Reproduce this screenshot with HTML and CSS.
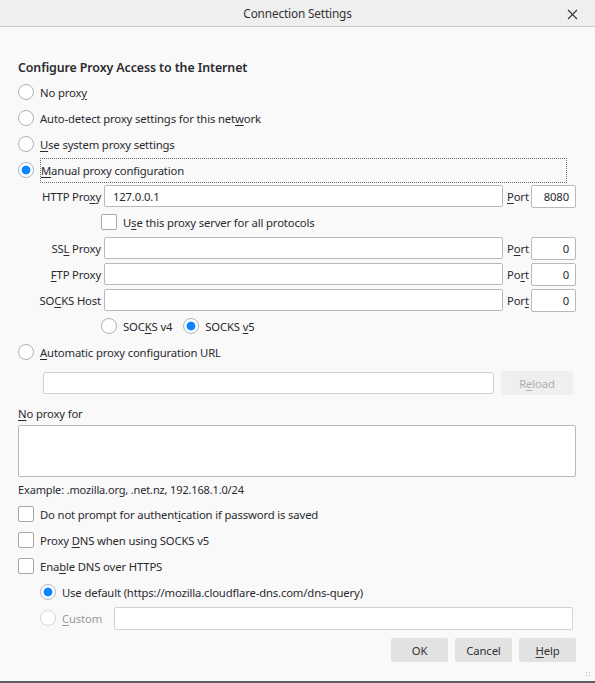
FILE: index.html
```html
<!DOCTYPE html>
<html>
<head>
<meta charset="utf-8">
<link rel="stylesheet" href="styles.css">
</head>
<body>
<div class="window">
  <div class="titlebar">
    <span class="title">Connection Settings</span>
    <svg class="close" width="11" height="11" viewBox="0 0 11 11"><path d="M1 1 L10 10 M10 1 L1 10" stroke="#333" stroke-width="1.1" fill="none"/></svg>
  </div>
  <div class="content">
    <div class="heading">Configure Proxy Access to the Internet</div>
    <div class="row"><span class="radio"></span><span class="lbl">No prox<u>y</u></span></div>
    <div class="row"><span class="radio"></span><span class="lbl">Auto-detect proxy settings for this net<u>w</u>ork</span></div>
    <div class="row"><span class="radio"></span><span class="lbl"><u>U</u>se system proxy settings</span></div>
    <div class="row"><span class="radio checked"></span><span class="lbl focus"><u>M</u>anual proxy configuration</span></div>

    <div class="proxy-row">
      <span class="plabel">HTTP Pro<u>x</u>y</span>
      <span class="input grow">127.0.0.1</span>
      <span class="port-lbl"><u>P</u>ort</span>
      <span class="input port">8080</span>
    </div>
    <div class="row indent2"><span class="check"></span><span class="lbl">U<u>s</u>e this proxy server for all protocols</span></div>
    <div class="proxy-row">
      <span class="plabel">SS<u>L</u> Proxy</span>
      <span class="input grow"></span>
      <span class="port-lbl">P<u>o</u>rt</span>
      <span class="input port">0</span>
    </div>
    <div class="proxy-row">
      <span class="plabel"><u>F</u>TP Proxy</span>
      <span class="input grow"></span>
      <span class="port-lbl">Po<u>r</u>t</span>
      <span class="input port">0</span>
    </div>
    <div class="proxy-row">
      <span class="plabel">SO<u>C</u>KS Host</span>
      <span class="input grow"></span>
      <span class="port-lbl">Por<u>t</u></span>
      <span class="input port">0</span>
    </div>
    <div class="row indent2">
      <span class="radio"></span><span class="lbl">SOC<u>K</u>S v4</span>
      <span class="radio checked second"></span><span class="lbl">SOCKS <u>v</u>5</span>
    </div>
    <div class="row"><span class="radio"></span><span class="lbl"><u>A</u>utomatic proxy configuration URL</span></div>
    <div class="url-row">
      <span class="input url"></span>
      <span class="btn disabled">R<u>e</u>load</span>
    </div>
    <div class="np-label"><u>N</u>o proxy for</div>
    <div class="textarea"></div>
    <div class="example">Example: .mozilla.org, .net.nz, 192.168.1.0/24</div>
    <div class="row"><span class="check"></span><span class="lbl">Do not prompt for authent<u>i</u>cation if password is saved</span></div>
    <div class="row"><span class="check"></span><span class="lbl">Proxy <u>D</u>NS when using SOCKS v5</span></div>
    <div class="row"><span class="check"></span><span class="lbl">Ena<u>b</u>le DNS over HTTPS</span></div>
    <div class="row indent1"><span class="radio checked"></span><span class="lbl">Use default (https://mozilla.cloudflare-dns.com/dns-query)</span></div>
    <div class="row indent1 custom-row"><span class="radio faded"></span><span class="lbl faded-text"><u>C</u>ustom</span><span class="input custom"></span></div>
    <div class="buttons">
      <span class="btn">OK</span>
      <span class="btn">Cancel</span>
      <span class="btn"><u>H</u>elp</span>
    </div>
  </div>
  <div class="grip"></div>
</div>
</body>
</html>
```

FILE: styles.css
```css
* { box-sizing: border-box; }
html, body { margin: 0; padding: 0; }
body {
  width: 595px;
  height: 683px;
  background: #f9f9fa;
  font-family: "Noto Sans", "Open Sans", sans-serif;
  font-size: 11.3px;
  letter-spacing: -0.15px;
  color: #2a2a2e;
  overflow: hidden;
}
u { text-decoration: underline; text-underline-offset: 2px; }
.window {
  position: relative;
  width: 595px;
  height: 683px;
  border-bottom: 2px solid #5e5e60;
}
.titlebar {
  height: 27px;
  background: #efeff0;
  border-bottom: 1px solid #c9c9cb;
  display: flex;
  align-items: center;
  justify-content: center;
  position: relative;
}
.title { font-size: 11.8px; color: #333; }
.close { position: absolute; right: 17px; top: 9px; }
.content {
  padding: 29px 19px 0 18px;
  display: flex;
  flex-direction: column;
}
.heading {
  height: 23px;
  font-size: 12.4px;
  letter-spacing: -0.1px;
  font-weight: 600;
  color: #2a2a2e;
  display: flex;
  align-items: center;
}
.row {
  height: 26px;
  display: flex;
  align-items: center;
}
.indent1 { padding-left: 22px; }
.indent2 { padding-left: 83px; }
.radio {
  width: 16px;
  height: 16px;
  border-radius: 50%;
  border: 1px solid #b1b1b3;
  background: #fff;
  flex: none;
  margin-right: 6px;
}
.radio.checked {
  background: radial-gradient(circle, #0a84ff 0, #0a84ff 4px, #fff 4.8px);
  border-color: #a8b8c8;
}
.radio.second { margin-left: 11px; }
.radio.faded { border-color: #d5d5d7; }
.faded-text { color: #9a9a9c; }
.check {
  width: 16px;
  height: 16px;
  border-radius: 2px;
  border: 1px solid #a8a8aa;
  background: #fff;
  flex: none;
  margin-right: 6px;
}
.lbl { white-space: nowrap; }
.lbl.focus {
  flex: 1;
  height: 25px;
  display: flex;
  align-items: center;
  border: 1px dotted #6e6e70;
  margin-right: 9px;
}
.proxy-row {
  height: 26px;
  display: flex;
  align-items: center;
  padding-left: 22px;
}
.plabel {
  width: 64px;
  text-align: right;
  white-space: nowrap;
  margin-right: 3px;
  margin-left: -3px;
}
.input {
  height: 22px;
  background: #fff;
  border: 1px solid #b9b9bb;
  border-radius: 2px;
  display: flex;
  align-items: center;
  padding: 0 8px;
}
.grow { flex: 1; }
.port-lbl { margin: 0 3px 0 4px; width: 21px; }
.port {
  width: 45px;
  height: 23px;
  justify-content: flex-end;
  padding-right: 6px;
}
.url-row {
  height: 36px;
  display: flex;
  align-items: center;
  padding-left: 25px;
  padding-right: 3px;
}
.url { flex: 1; border-color: #cfcfd1; }
.btn {
  height: 24px;
  background: #e2e2e3;
  border-radius: 2px;
  display: flex;
  align-items: center;
  justify-content: center;
  color: #333;
}
.btn.disabled {
  width: 72px;
  margin-left: 7px;
  background: #efeff0;
  color: #aeaeb0;
}
.np-label {
  height: 24px;
  display: flex;
  align-items: center;
}
.textarea {
  height: 52px;
  background: #fff;
  border: 1px solid #b9b9bb;
  border-radius: 2px;
}
.example {
  height: 24px;
  display: flex;
  align-items: center;
  font-size: 11px;
}
.custom-row { padding-right: 3px; }
.custom {
  flex: 1;
  margin-left: 12px;
  border-color: #d2d2d4;
  height: 23px;
}
.buttons {
  margin-top: 7px;
  display: flex;
  justify-content: flex-end;
  gap: 7px;
}
.buttons .btn { width: 57px; }
.grip {
  position: absolute;
  right: 3px;
  bottom: 3px;
  width: 7px;
  height: 7px;
  background-image: radial-gradient(circle, #9a9a9c 0.8px, transparent 1px);
  background-size: 3px 3px;
  opacity: 0.7;
}
```
